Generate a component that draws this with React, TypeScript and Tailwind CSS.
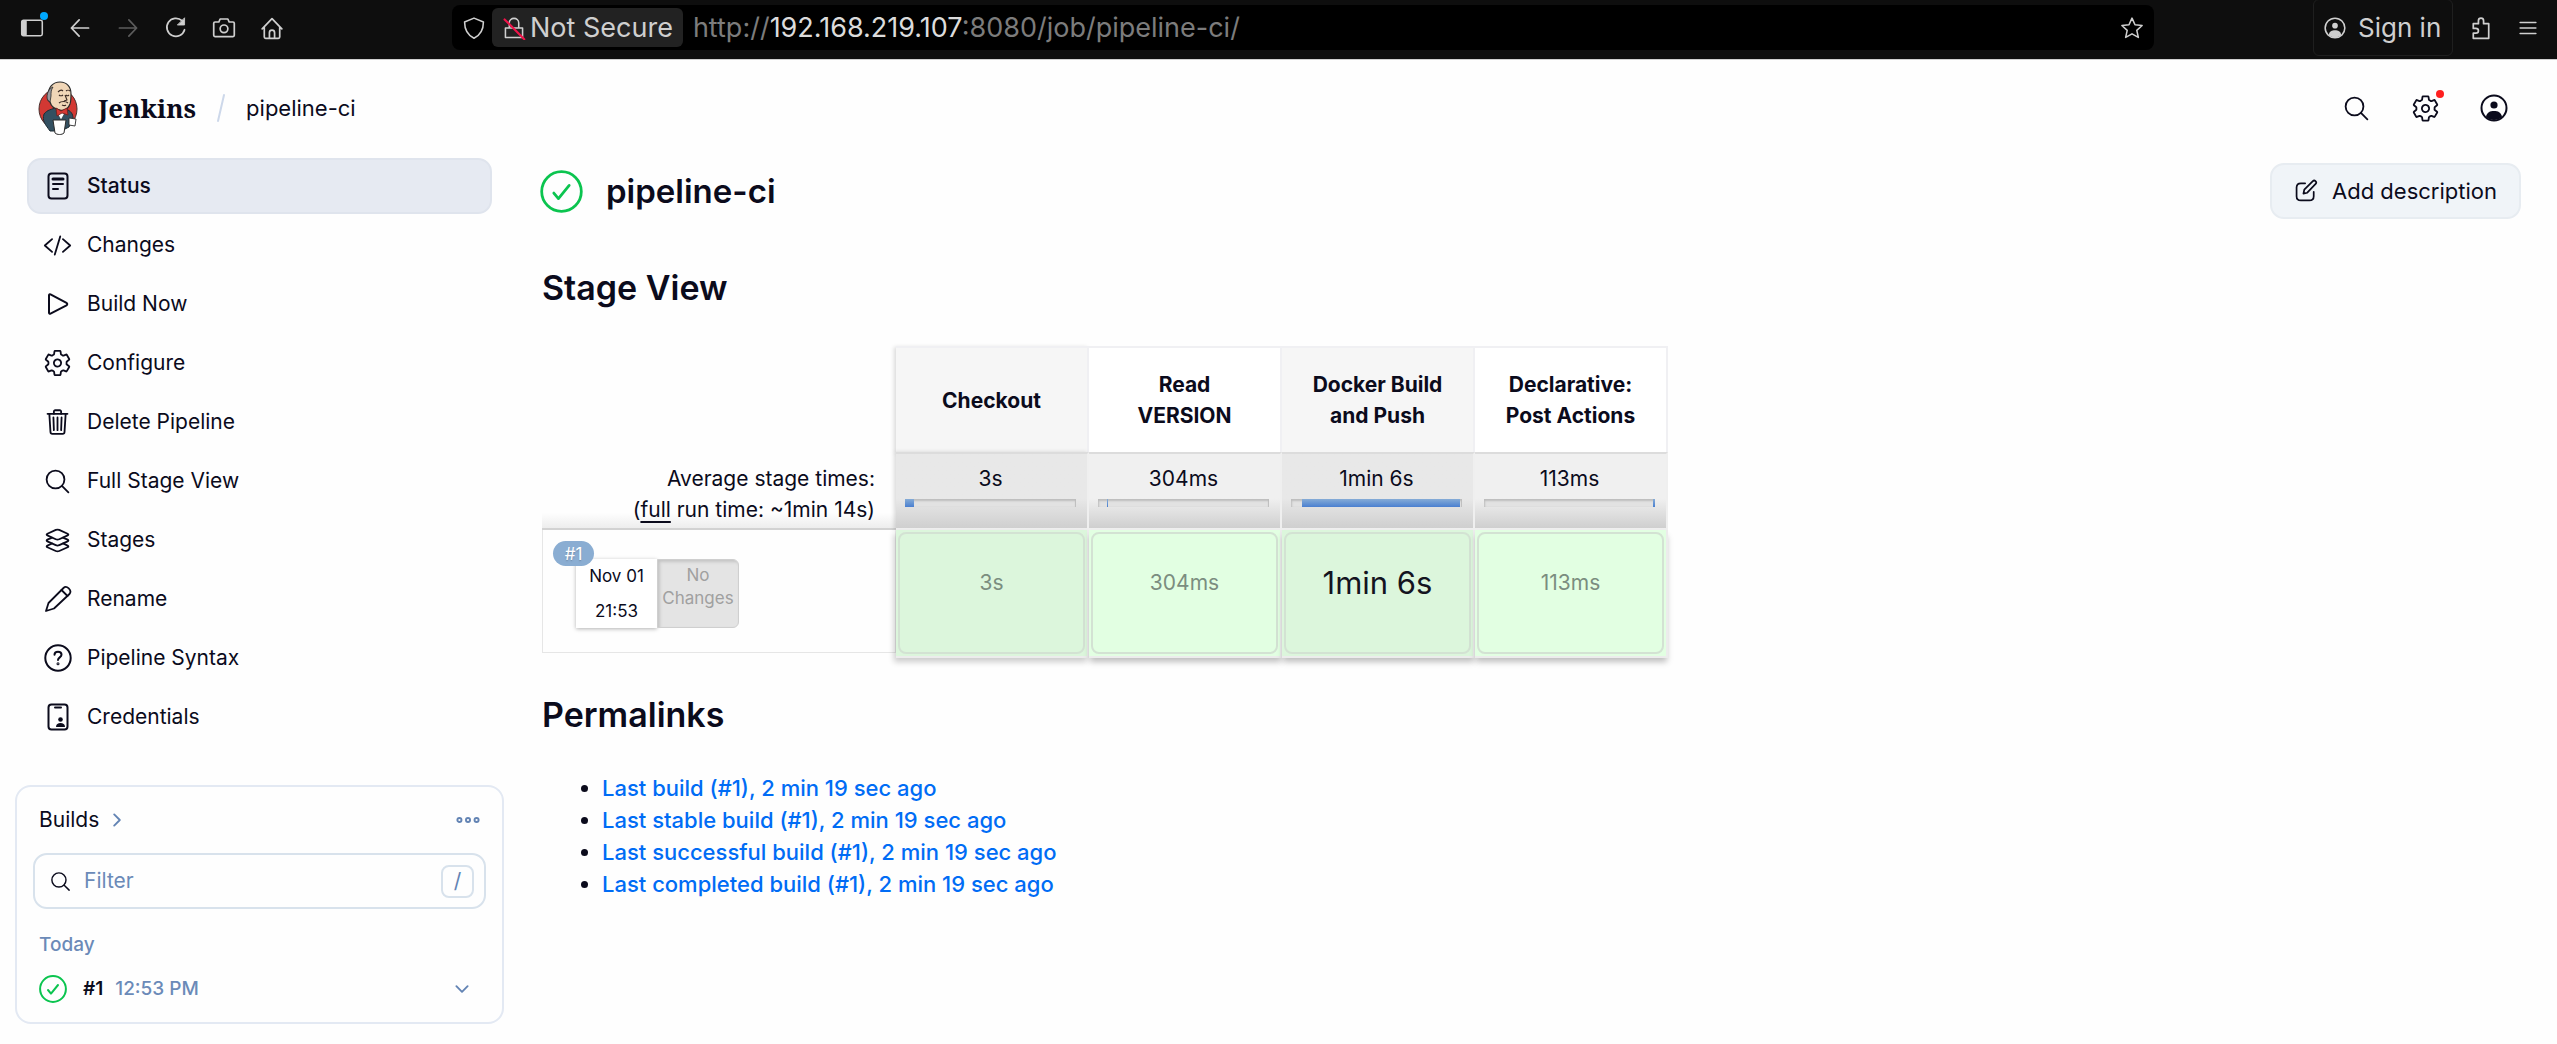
import type { ReactNode } from 'react';
import {
  IoChevronDownOutline,
  IoChevronForwardOutline,
  IoCodeSlashOutline,
  IoLayersOutline,
  IoSearchOutline,
  IoSettingsOutline,
  IoTrashOutline,
} from 'react-icons/io5';

function Svg({ size, width = 2, children }: { size: number; width?: number; children: ReactNode }) {
  return (
    <svg
      width={size}
      height={size}
      viewBox="0 0 28 28"
      fill="none"
      stroke="currentColor"
      strokeWidth={width}
      strokeLinecap="round"
      strokeLinejoin="round"
      aria-hidden="true"
      className="shrink-0"
    >
      {children}
    </svg>
  );
}

function JenkinsLogo() {
  return (
    <svg width="40" height="54" viewBox="0 0 40 54" strokeLinejoin="round" aria-hidden="true">
      <ellipse cx="20" cy="28" rx="19" ry="20" fill="#d33833" stroke="#46302e" strokeWidth="1" />
      <path d="M6 33c3-4 8-5 12-6l10 1c5 2 7 5 7 9l-4 9-8 4H12C7 43 4 40 6 33z" fill="#335061" stroke="#1d2b33" strokeWidth="1" />
      <path d="M10 15C10 6 15 1 22 1c7 0 11 5 11 12 0 4 0 7-1 10-2 5-6 7-10 6-6-1-9-4-10-8-2-1-3-3-2-6z" fill="#f0d6b7" stroke="#2b2b2b" strokeWidth="1.2" />
      <path d="M9 16c0-5 3-9 6-10-2 3-2 5-2 9l-1 6c-2-1-3-3-3-5z" fill="#9a9a9f" stroke="#2b2b2b" strokeWidth="0.8" />
      <path d="M20 11c2-2 4-2 5-1M28 10c1-1 3-1 4 0M21 14c1 1 3 1 4 0M28 14c1 1 2 1 3 0M27 14l2 5-3 1M21 22c2-2 7-2 9 0M24 24c2 1 3 1 4 0" fill="none" stroke="#3b2b24" strokeWidth="1.1" />
      <path d="M18 30l5 9 5-9z" fill="#fff" stroke="#1d2b33" strokeWidth="0.6" />
      <path d="M18 27l5 3 6-3 1 7-6-2-5 3z" fill="#d33833" stroke="#6b1f1c" strokeWidth="0.8" />
      <path d="M31 37l7 1-1 7-6-1z" fill="#fff" stroke="#2b2b2b" strokeWidth="0.9" />
      <path d="M15 39h13l-2 13c-2 2-7 2-9 0z" fill="#fff" stroke="#2b2b2b" strokeWidth="1" />
    </svg>
  );
}

function CheckIcon({ size, width }: { size: number; width: number }) {
  return (
    <span className="flex text-[#0bc44f]">
      <Svg size={size} width={width}>
        <circle cx="14" cy="14" r="12.9" />
        <path d="M9 15l3 3.6 7-8.6" />
      </Svg>
    </span>
  );
}

function PersonIcon({ size }: { size: number }) {
  return (
    <Svg size={size} width={2}>
      <circle cx="14" cy="14" r="12.5" />
      <circle cx="14" cy="11" r="3.6" fill="currentColor" stroke="none" />
      <path d="M6 23c1-5 4-6 8-6s7 1 8 6c-4 4-12 4-16 0z" fill="currentColor" stroke="none" />
    </Svg>
  );
}

const tasks: { label: string; icon: ReactNode }[] = [
  {
    label: 'Status',
    icon: (
      <Svg size={28}>
        <rect x="4.5" y="1.5" width="19" height="25" rx="3" />
        <path d="M9 7h10" strokeWidth="3" />
        <path d="M9 12h10M9 17h5" />
      </Svg>
    ),
  },
  { label: 'Changes', icon: <IoCodeSlashOutline size={31} /> },
  {
    label: 'Build Now',
    icon: (
      <Svg size={28}>
        <path d="M5 5.2v17.6c0 .9.7 1.3 1.5.9l16-8.4c1-.6 1-1.9 0-2.5l-16-8.5c-.8-.4-1.5 0-1.5.9z" />
      </Svg>
    ),
  },
  { label: 'Configure', icon: <IoSettingsOutline size={30} /> },
  { label: 'Delete Pipeline', icon: <IoTrashOutline size={30} /> },
  { label: 'Full Stage View', icon: <IoSearchOutline size={31} /> },
  { label: 'Stages', icon: <IoLayersOutline size={29} /> },
  {
    label: 'Rename',
    icon: (
      <Svg size={28} width={1.8}>
        <path d="M2 26l2.5-8L19.5 3c3-3 9 2 6 6L10 23.5z" />
        <path d="M17.5 5l6 6" />
      </Svg>
    ),
  },
  {
    label: 'Pipeline Syntax',
    icon: (
      <Svg size={28}>
        <circle cx="14" cy="14" r="12.7" />
        <path d="M10.5 10.8c0-4.2 7-4.2 7 0 0 2.5-3.5 2.7-3.5 5.2" />
        <circle cx="14" cy="19.8" r="0.5" />
      </Svg>
    ),
  },
  {
    label: 'Credentials',
    icon: (
      <Svg size={28}>
        <rect x="4.5" y="1.5" width="19" height="25" rx="3" />
        <path d="M11 4.5h6" />
        <circle cx="16.5" cy="16.5" r="2.3" fill="currentColor" stroke="none" />
        <path d="M12 24c0-3 2-4 4.5-4s4.5 1 4.5 4z" fill="currentColor" stroke="none" />
      </Svg>
    ),
  },
];

// start and width are percentages of the whole run
const stages = [
  { name: 'Checkout', time: '3s', start: 0, width: 5.5, dark: true },
  { name: 'Read VERSION', time: '304ms', start: 5.5, width: 0.6, dark: false },
  { name: 'Docker Build and Push', time: '1min 6s', start: 6.2, width: 92.8, dark: true, long: true },
  { name: 'Declarative: Post Actions', time: '113ms', start: 98.9, width: 1.1, dark: false },
];

const permalinks = [
  'Last build (#1), 2 min 19 sec ago',
  'Last stable build (#1), 2 min 19 sec ago',
  'Last successful build (#1), 2 min 19 sec ago',
  'Last completed build (#1), 2 min 19 sec ago',
];

function BrowserBar() {
  return (
    <div className="flex h-[60px] items-center border-b border-[#cfcfcf] bg-[#0e0e0e] pb-1 text-[#cfcfcf]">
      <div className="flex w-[452px] shrink-0 items-center gap-6 pl-5">
        <button aria-label="Sidebar" className="relative">
          <Svg size={24} width={1.8}>
            <rect x="2" y="5" width="24" height="18" rx="2" />
            <path d="M3 6h4v16H3z" fill="currentColor" />
          </Svg>
          <span className="absolute -top-1 -right-1 size-2 rounded-full bg-[#00a8ff]" />
        </button>
        <button aria-label="Back">
          <Svg size={24}><path d="M24 14H4M13 4.5L4 14l9 9.5" /></Svg>
        </button>
        <button aria-label="Forward" className="text-[#5c5c5c]">
          <Svg size={24}><path d="M4 14h20M15 4.5l9 9.5-9 9.5" /></Svg>
        </button>
        <button aria-label="Reload">
          <Svg size={24}>
            <path d="M24 16a10.5 10.5 0 1 1-3-10.5" />
            <path d="M24 2.5v8h-8z" fill="currentColor" strokeWidth="1" />
          </Svg>
        </button>
        <button aria-label="Screenshot">
          <Svg size={24}>
            <path d="M3.5 7H8l1.5-3.5h9L20 7h4.5c1 0 1.5.5 1.5 1.5v14c0 1-.5 1.5-1.5 1.5h-21c-1 0-1.5-.5-1.5-1.5v-14C2 7.5 2.5 7 3.5 7z" />
            <circle cx="14" cy="15" r="4.5" />
          </Svg>
        </button>
        <button aria-label="Home">
          <Svg size={24}>
            <path d="M2.5 15L14 3l11.5 12M5 13v11.5c0 1 .5 1.5 1.5 1.5h15c1 0 1.5-.5 1.5-1.5V13M11 26v-6.5c0-4 6-4 6 0V26" />
          </Svg>
        </button>
      </div>
      <div className="flex h-[45px] flex-1 items-center rounded-lg bg-black pl-1">
        <span className="flex w-9 justify-center">
          <Svg size={24} width={1.8}><path d="M14 2.5l11 4.5c0 9-3 15-11 19C6 22 3 16 3 7z" /></Svg>
        </span>
        <button className="flex h-[39px] items-center gap-1 rounded-md bg-[#222] px-[10px] text-[27px] leading-8">
          <Svg size={24} width={1.8}>
            <path d="M4 14h20v11H4zM8.5 14V8c0-7 11-7 11 0v6" />
            <path d="M3 4l23 23" stroke="#f0144a" strokeWidth="2.5" />
          </Svg>
          Not Secure
        </button>
        <div className="flex-1 pl-[10px] text-[27px] leading-8 text-[#7c7c7c]">
          http://<span className="text-[#dcdcdc]">192.168.219.107</span>:8080/job/pipeline-ci/
        </div>
        <button aria-label="Bookmark" className="mr-[10px]">
          <Svg size={24} width={1.8}>
            <path d="M14 2.5l3.5 7.7 8.3.9-6.2 5.6 1.8 8.3L14 20.8 6.6 25l1.8-8.3L2.2 11.1l8.3-.9z" />
          </Svg>
        </button>
      </div>
      <div className="flex w-[403px] shrink-0 items-center justify-end pr-[18px]">
        <button className="flex h-[57px] w-[140px] items-center gap-3 rounded-md border border-[#1f1f1f] pl-[10px] text-[26px]">
          <PersonIcon size={22} />
          Sign in
        </button>
        <button aria-label="Extensions" className="ml-4">
          <Svg size={24}>
            <path d="M5 9h6V5.5c0-4 6-4 6 0V9h6v17H5v-6h3c4 0 4-5.5 0-5.5H5z" />
          </Svg>
        </button>
        <button aria-label="Menu" className="ml-6">
          <Svg size={22}><path d="M4 7h20M4 14h20M4 21h20" /></Svg>
        </button>
      </div>
    </div>
  );
}

function PageHeader() {
  return (
    <header className="flex h-[97px] items-center pr-[49px] pb-px pl-[38px]">
      <a href="#jenkins" className="flex items-center gap-5">
        <JenkinsLogo />
        <span className="font-['Noto_Serif','DejaVu_Serif_Condensed','DejaVu_Serif',serif] text-[26px] leading-8 font-bold">Jenkins</span>
      </a>
      <svg width="10" height="30" viewBox="0 0 10 30" className="mx-5" aria-hidden="true">
        <path d="M8 2L2 28" stroke="#cdd8ea" strokeWidth="2" strokeLinecap="round" />
      </svg>
      <a href="#pipeline-ci" className="text-[22px]">pipeline-ci</a>
      <div className="ml-auto flex items-center gap-10">
        <button aria-label="Search"><IoSearchOutline size={29} /></button>
        <button aria-label="Manage Jenkins" className="relative">
          <IoSettingsOutline size={29} />
          <span className="absolute -top-1 -right-1 size-2 rounded-full bg-[#ff1f1f]" />
        </button>
        <button aria-label="User"><PersonIcon size={28} /></button>
      </div>
    </header>
  );
}

function Builds() {
  return (
    <section className="mt-10 -ml-3 w-[489px] rounded-2xl border-2 border-[#e3e9f3] px-4 pt-[11px] pb-[11px]">
      <div className="flex h-11 items-center justify-between px-[6px]">
        <a href="#builds" className="flex items-center gap-2">
          Builds <IoChevronForwardOutline size={20} className="text-[#6384b4]" />
        </a>
        <button aria-label="More" className="text-[#6384b4]">
          <Svg size={24} width={2.2}>
            <circle cx="4" cy="14" r="2.4" />
            <circle cx="14" cy="14" r="2.4" />
            <circle cx="24" cy="14" r="2.4" />
          </Svg>
        </button>
      </div>
      <label className="mt-[11px] flex h-14 items-center rounded-[14px] border-2 border-[#d8e2ec] pr-[10px] pl-[14px]">
        <IoSearchOutline size={23} />
        <input placeholder="Filter" aria-label="Filter" className="ml-3 min-w-0 flex-1 outline-none placeholder:text-[#6b8ab8]" />
        <kbd className="flex size-[33px] items-center justify-center rounded-lg border-2 border-[#d8e2ec] font-[inherit] text-[21px] text-[#6384b4]">/</kbd>
      </label>
      <h3 className="mt-[22px] px-[6px] text-[19px] leading-7 font-medium text-[#6b8ab8]">Today</h3>
      <div className="mt-2 flex h-11 items-center px-[6px] text-[19px]">
        <CheckIcon size={28} width={2} />
        <a href="#1" className="ml-4 font-semibold">#1</a>
        <span className="ml-3 font-medium text-[#6b8ab8]">12:53 PM</span>
        <button aria-label="Details" className="mr-2 ml-auto text-[#6384b4]">
          <IoChevronDownOutline size={20} />
        </button>
      </div>
    </section>
  );
}

function Sidebar() {
  return (
    <aside className="w-[515px] shrink-0 pl-[27px] text-[21px]">
      <nav className="flex w-[465px] flex-col gap-[3px] pt-px">
        {tasks.map((task, i) => (
          <a
            key={task.label}
            href="#task"
            className={
              i === 0
                ? 'flex h-14 items-center gap-[15px] rounded-[14px] border-2 border-[#dfe4ed] bg-[#e6eaf2] pl-[14px] font-medium'
                : 'flex h-14 items-center gap-[15px] rounded-[14px] pl-4'
            }
          >
            <span className="flex w-[29px] shrink-0 justify-center">{task.icon}</span>
            {task.label}
          </a>
        ))}
      </nav>
      <Builds />
    </aside>
  );
}

function StageView() {
  return (
    <table className="w-[1126px] table-fixed border-separate border-spacing-0 text-center text-[21px]">
      <thead>
        <tr className="h-[106px]">
          <td className="w-[354px]" />
          {stages.map((stage, i) => (
            <th
              key={stage.name}
              className={`border-t-2 border-r-2 border-[#f0f0f3] px-[26px] leading-[31px] font-bold ${
                stage.dark ? 'bg-[#f6f6f6]' : 'bg-white'
              } ${i === 0 ? 'shadow-[-2px_1px_4px_rgba(0,0,0,0.14)]' : ''}`}
            >
              {stage.name}
            </th>
          ))}
        </tr>
      </thead>
      <tbody>
        <tr className="h-[78px] align-top">
          <td className="border-b-2 border-[#d2d2d2] bg-linear-to-b from-transparent from-80% to-[#ededed] pt-[11px] pr-[21px] text-right leading-[31px]">
            Average stage times:
            <br />(<a href="#full" className="underline underline-offset-4">full</a> run time: ~1min 14s)
          </td>
          {stages.map((stage, i) => (
            <td
              key={stage.name}
              className={`border-t-2 border-r-2 border-b-2 border-t-[#dcdcdc] border-r-[#efefef] border-b-[#efefef] bg-linear-to-b from-60% to-[#cfcfcf] pt-[9px] pr-[11px] pl-[9px] leading-[31px] ${
                stage.dark ? 'from-[#e8e8e8]' : 'from-[#f0f0f0]'
              } ${i === 0 ? 'shadow-[-2px_0_4px_rgba(0,0,0,0.14)]' : ''}`}
            >
              {stage.time}
              <div className="mt-[5px] h-2 bg-[#e2e2e2] shadow-[inset_1px_2px_2px_#bdbdbd,inset_-1px_0_1px_#bdbdbd]">
                <div
                  className="h-full bg-linear-to-b from-[#86acd6] to-[#4a7fd0]"
                  style={{ marginLeft: `${stage.start}%`, width: `${stage.width}%` }}
                />
              </div>
            </td>
          ))}
        </tr>
        <tr className="h-[128px]">
          <td className="align-top">
            <div className="h-[123px] border border-t-0 border-[#e6e6e6] pt-[11px] pl-[10px]">
              <span className="relative z-10 flex h-[25px] w-[41px] items-center justify-center rounded-full bg-[#8aadd2] text-[17px] text-white text-shadow-sm">
                #1
              </span>
              <div className="-mt-[7px] ml-[23px] flex h-[69px] w-[163px] text-[17px]">
                <div className="flex w-[81px] flex-col justify-around bg-white leading-6 shadow-[0_1px_4px_rgba(0,0,0,0.3)]">
                  <span>Nov 01</span>
                  <span>21:53</span>
                </div>
                <div className="flex-1 rounded-r-md border border-[#cfcfcf] bg-[#e4e4e4] pt-1 leading-[23px] text-[#a0a0a0] shadow-[inset_2px_2px_3px_#c4c4c4]">
                  No Changes
                </div>
              </div>
            </div>
          </td>
          {stages.map((stage, i) => (
            <td
              key={stage.name}
              className={`border-r-2 border-b-2 border-[#ececec] p-[2px] ${
                i === 0 ? 'shadow-[-2px_4px_6px_rgba(0,0,0,0.2)]' : 'shadow-[0_5px_6px_-1px_rgba(0,0,0,0.25)]'
              } ${stage.dark ? 'bg-[#dcf6dc]' : 'bg-[#e2ffe2]'}`}
            >
              <div className="flex h-[122px] justify-center rounded-lg border-2 border-[#d3e2d3] pt-[33px] leading-8">
                {stage.long ? (
                  <span className="text-[31px] text-[#14141f]">{stage.time}</span>
                ) : (
                  <span className="text-[#7b8d7f]">{stage.time}</span>
                )}
              </div>
            </td>
          ))}
        </tr>
      </tbody>
    </table>
  );
}

export default function App() {
  return (
    <div className="min-h-screen bg-[#fefefe] font-[Inter,'Open_Sans',sans-serif] text-[20px] leading-8 text-[#0b0b1c]">
      <BrowserBar />
      <PageHeader />
      <div className="flex">
        <Sidebar />
        <main className="min-w-0 flex-1 pt-[6px] pr-9 pl-[27px]">
          <div className="flex items-center">
            <span className="-ml-0.5"><CheckIcon size={43} width={1.8} /></span>
            <h1 className="ml-[23px] text-[33px] font-semibold">pipeline-ci</h1>
            <button className="ml-auto flex h-14 items-center gap-[14px] rounded-[14px] border-2 border-[#e7ecf1] bg-[#f0f4f8] px-[22px] text-[22px]">
              <Svg size={24}>
                <path d="M13 5H8C5 5 3 7 3 10v10c0 3 2 5 5 5h10c3 0 5-2 5-5v-5" />
                <path d="M11 17l1-4.5L22 2.5c2-2 5 1 3.5 3L15.5 16z" />
              </Svg>
              Add description
            </button>
          </div>
          <h2 className="mt-[49px] text-[34px] leading-10 font-semibold">Stage View</h2>
          <div className="mt-[38px]">
            <StageView />
          </div>
          <h2 className="mt-[37px] text-[34px] leading-10 font-semibold">Permalinks</h2>
          <ul className="mt-[37px] list-disc pl-[60px] text-[22px] leading-8">
            {permalinks.map((text) => (
              <li key={text}>
                <a href="#permalink" className="font-medium text-[#006cf5]">{text}</a>
              </li>
            ))}
          </ul>
        </main>
      </div>
    </div>
  );
}
